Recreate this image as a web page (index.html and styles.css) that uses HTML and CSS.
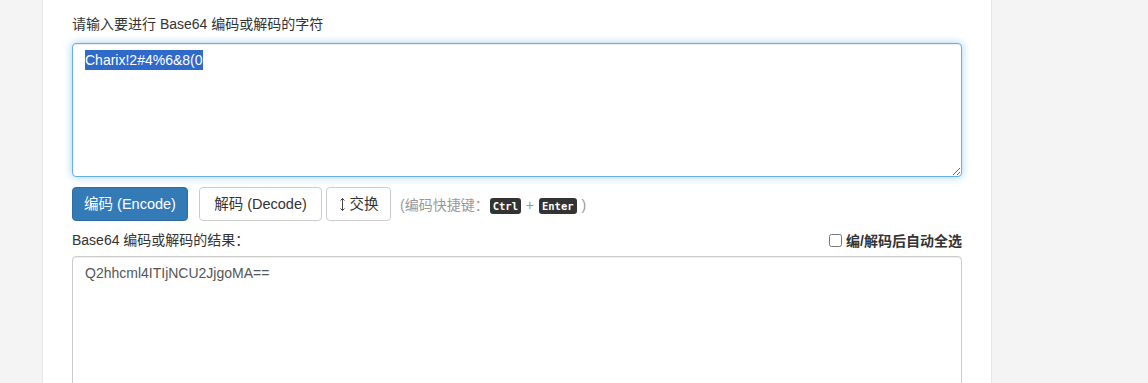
FILE: index.html
```html
<!DOCTYPE html>
<html lang="zh">
<head>
    <meta charset="UTF-8">
    <meta name="viewport" content="width=device-width, initial-scale=1.0">
    <title>Base64 编码/解码</title>
    <link rel="stylesheet" href="styles.css">
</head>
<body>
    <div class="panel">
        <label class="field-label" for="srcText">请输入要进行 Base64 编码或解码的字符</label>
        <textarea id="srcText" class="form-control src focused">Charix!2#4%6&amp;8(0</textarea>

        <div class="actions">
            <button class="btn btn-primary" type="button">编码 (Encode)</button>
            <button class="btn btn-default btn-decode" type="button">解码 (Decode)</button>
            <button class="btn btn-default btn-swap" type="button">
                <svg class="swap-icon" width="7" height="15" viewBox="0 0 7 15" fill="none" stroke="#444" stroke-width="1">
                    <path d="M3.5 1.5v12"/>
                    <path d="M1.5 3.5l2-2 2 2"/>
                    <path d="M1.5 11.5l2 2 2-2"/>
                </svg>交换
            </button>
            <span class="hint">(编码快捷键：<kbd>Ctrl</kbd> + <kbd>Enter</kbd> )</span>
        </div>

        <div class="result-head">
            <span class="field-label">Base64 编码或解码的结果：</span>
            <label class="auto-select"><input type="checkbox"> 编/解码后自动全选</label>
        </div>
        <textarea class="form-control dst">Q2hhcml4ITIjNCU2JjgoMA==</textarea>
    </div>

    <script>
        var src = document.getElementById('srcText');
        src.focus();
        src.setSelectionRange(0, src.value.length);
    </script>
</body>
</html>
```

FILE: styles.css
```css
body {
    margin: 0;
    background-color: #f4f4f4;
    font-family: "Liberation Sans", "Noto Sans CJK SC", sans-serif;
    font-size: 14px;
    color: #333;
}
.panel {
    box-sizing: border-box;
    width: 950px;
    margin-left: 42px;
    min-height: 100vh;
    padding: 14px 29px 0 29px;
    background: #fff;
    border-left: 1px solid #e8e8e8;
    border-right: 1px solid #e8e8e8;
}
.field-label {
    display: block;
    line-height: 20px;
    font-size: 14px;
    margin-bottom: 9px;
}
.form-control {
    display: block;
    box-sizing: border-box;
    width: 890px;
    padding: 6px 12px;
    border: 1px solid #ccc;
    border-radius: 4px;
    font-family: "Liberation Sans", "Noto Sans CJK SC", sans-serif;
    font-size: 14px;
    line-height: 20px;
    color: #555;
    background: #fff;
    box-shadow: inset 0 1px 1px rgba(0, 0, 0, 0.075);
    outline: 0;
}
.src {
    height: 134px;
}
.src::selection {
    background: #2f6acb;
    color: #fff;
}
.focused {
    border-color: #66afe9;
    box-shadow: inset 0 1px 1px rgba(0, 0, 0, 0.075), 0 0 8px rgba(102, 175, 233, 0.6);
}
.dst {
    height: 140px;
}
.actions {
    display: flex;
    align-items: center;
    margin-top: 10px;
}
.btn {
    box-sizing: border-box;
    height: 34px;
    padding: 6px 0;
    border: 1px solid #ccc;
    border-radius: 4px;
    font-family: "Liberation Sans", "Noto Sans CJK SC", sans-serif;
    font-size: 14.5px;
    line-height: 20px;
    white-space: nowrap;
    text-align: center;
    color: #333;
    background: #fff;
}
.btn-primary {
    width: 116px;
    color: #fff;
    background: #337ab7;
    border-color: #2e6da4;
}
.btn-decode {
    width: 123px;
    margin-left: 11px;
}
.btn-swap {
    display: flex;
    align-items: center;
    justify-content: center;
    width: 65px;
    margin-left: 4px;
}
.swap-icon {
    margin-right: 4px;
}
.hint {
    margin-left: 9px;
    color: #999;
    font-size: 14px;
}
kbd {
    padding: 2px 3px;
    margin: 0 1px;
    font-family: "DejaVu Sans Mono", monospace;
    font-size: 10.5px;
    font-weight: bold;
    color: #fff;
    background: #333;
    border-radius: 3px;
}
.result-head {
    display: flex;
    justify-content: space-between;
    align-items: center;
    margin-top: 9px;
    margin-bottom: 6px;
}
.result-head .field-label {
    margin-bottom: 0;
}
.auto-select {
    display: flex;
    align-items: center;
    font-weight: bold;
    font-size: 14px;
}
.auto-select input {
    width: 13px;
    height: 13px;
    margin: 0 4px 0 0;
}
```
